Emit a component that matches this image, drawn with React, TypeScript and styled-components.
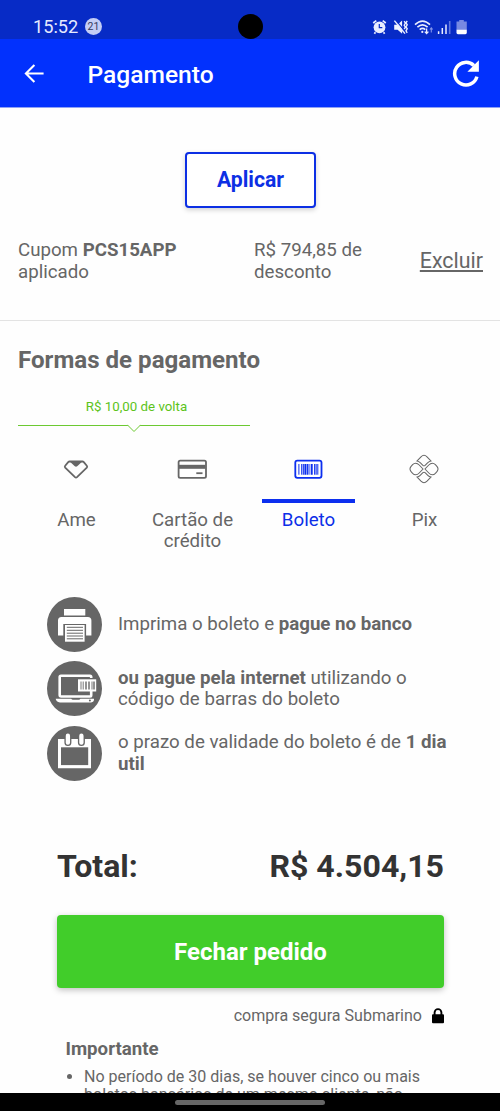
import React from "react";
import styled, { createGlobalStyle } from "styled-components";

const GlobalStyle = createGlobalStyle`
  * { box-sizing: border-box; }
  body { margin: 0; background: #fff; font-family: Roboto, sans-serif; color: #666; }
`;

const Screen = styled.div`
  width: 500px;
  height: 1111px;
  display: flex;
  flex-direction: column;
  overflow: hidden;
  background: #fefefe;
  font-size: 18.7px;
  line-height: 21.7px;
`;

const StatusBar = styled.div`
  height: 39px;
  flex: none;
  display: flex;
  align-items: center;
  padding: 14px 32px 0 33px;
  background: #072bc6;
  color: #e6eaff;
  position: relative;
`;

const Clock = styled.span`
  font-size: 18.2px;
  width: 52px;
  padding-top: 1px;
`;

const Count = styled.span`
  width: 17px;
  height: 17px;
  border-radius: 50%;
  background: #c3cdf5;
  color: #35395c;
  font-size: 10.5px;
  line-height: 17px;
  text-align: center;
`;

const Camera = styled.div`
  position: absolute;
  left: 238px;
  top: 14px;
  width: 25px;
  height: 25px;
  border-radius: 50%;
  background: #000;
`;

const StatusIcons = styled.svg`
  margin-left: auto;
  display: block;
`;

const AppBar = styled.header`
  height: 69px;
  flex: none;
  display: flex;
  align-items: center;
  padding: 1px 20px 0 24px;
  background: #0231fd;
  color: #fff;
  border-bottom: 1px solid #8ea2f5;
`;

const BarTitle = styled.h1`
  margin: 2px 0 0 43.5px;
  flex: 1;
  font-size: 24.6px;
  font-weight: 500;
  line-height: 28px;
`;

const Content = styled.main`
  flex: 1;
  min-height: 0;
  overflow: hidden;
`;

const Coupon = styled.section`
  height: 213px;
  padding: 44px 17px 0 18px;
  display: flex;
  flex-direction: column;
  align-items: center;
  border-bottom: 1px solid #e3e3e3;
`;

const ApplyButton = styled.button`
  width: 131px;
  height: 56px;
  padding: 0 0 1px;
  border: 2px solid #0c2fe4;
  border-radius: 4px;
  background: #fff;
  color: #0c2fe4;
  font: 700 21.2px Roboto, sans-serif;
  box-shadow: 0 2px 5px rgba(0, 0, 0, 0.18);
`;

const CouponRow = styled.div`
  align-self: stretch;
  margin-top: 31px;
  display: grid;
  grid-template-columns: 236px 1fr auto;
  align-items: center;
`;

const CouponText = styled.p<{ $max: number }>`
  margin: 0;
  padding-top: 1px;
  max-width: ${(p) => p.$max}px;
`;

const RemoveLink = styled.a`
  font-size: 21.4px;
  text-decoration: underline;
`;

const Payment = styled.section`
  padding: 25px 18px 0;
`;

const SectionTitle = styled.h2`
  margin: 0;
  font-size: 24.1px;
  line-height: 28px;
`;

const Cashback = styled.div`
  position: relative;
  width: 232px;
  height: 27px;
  margin-top: 25px;
  padding-left: 5px;
  border-bottom: 1px solid #6cc932;
  color: #5cc31a;
  font-size: 13.3px;
  line-height: 16px;
  text-align: center;
`;

const Notch = styled.svg`
  position: absolute;
  left: 109px;
  bottom: -8px;
`;

const Tabs = styled.div`
  display: grid;
  grid-template-columns: repeat(4, 116px);
  margin-top: 15px;
`;

const Tab = styled.div<{ $active?: boolean }>`
  display: flex;
  flex-direction: column;
  align-items: center;
  text-align: center;
  color: ${(p) => (p.$active ? "#0c2fe8" : "#666")};
`;

const TabIcon = styled.div<{ $active?: boolean }>`
  width: 93px;
  height: 62px;
  display: flex;
  justify-content: center;
  padding-top: 13px;
  border-bottom: 4px solid ${(p) => (p.$active ? "#0c2fef" : "transparent")};
`;

const TabLabel = styled.span`
  margin-top: 6.5px;
  padding-left: 1px;
  max-width: 90px;
  min-height: 43.4px;
`;

const Steps = styled.ul`
  list-style: none;
  margin: 44px 0 0;
  padding: 0 23px 0 29px;
  display: flex;
  flex-direction: column;
  gap: 9.5px;
`;

const Step = styled.li`
  display: flex;
  align-items: center;
  gap: 16px;
  height: 55px;
`;

const StepIcon = styled.svg`
  flex: none;
  display: block;
`;

const StepText = styled.p`
  margin: 0;
  padding-top: 1px;
`;

const Checkout = styled.section`
  margin-top: 67.5px;
  padding: 0 56px 0 57px;
`;

const TotalRow = styled.div`
  display: flex;
  justify-content: space-between;
  color: #333;
  font-size: 32.1px;
  font-weight: 700;
  line-height: 37px;
`;

const OrderButton = styled.button`
  display: block;
  width: 100%;
  height: 73px;
  margin-top: 30px;
  padding: 0;
  border: 0;
  border-radius: 4px;
  background: #41cd2a;
  color: #fff;
  font: 700 24px Roboto, sans-serif;
  box-shadow: 0 2px 6px rgba(0, 0, 0, 0.25);
`;

const Secure = styled.div`
  display: flex;
  justify-content: flex-end;
  align-items: center;
  gap: 10px;
  margin-top: 18px;
  font-size: 16.05px;
  line-height: 20px;
`;

const Notice = styled.div`
  padding: 11.5px 0 0 8.5px;
`;

const NoticeTitle = styled.h3`
  margin: 0;
  font-size: 18.67px;
  line-height: 22px;
`;

const NoticeList = styled.ul`
  margin: 8px 0 0;
  padding-left: 18.5px;
  font-size: 16.05px;
  line-height: 18.5px;
`;

const NavBar = styled.div`
  height: 18px;
  flex: none;
  display: flex;
  justify-content: center;
  align-items: center;
  background: #000;
`;

const Handle = styled.div`
  width: 150px;
  height: 5px;
  border-radius: 3px;
  background: #666;
`;

const SystemIcons = () => (
  <StatusIcons width="96" height="18" viewBox="0 0 96 18" fill="none" stroke="#e9edff">
    <circle cx="7.5" cy="9.3" r="5.9" fill="#e9edff" stroke="none" />
    <path d="M1.2 5 4.3 2.6M10.7 2.6 13.8 5M3.4 14.2l-1 1.6M11.6 14.2l1 1.6" strokeWidth="1.7" />
    <path d="M7.3 6v3.6h3" stroke="#072bc6" strokeWidth="1.2" />
    <path d="M22.2 6.8h3.4l4.5-4.4v13.4l-4.5-4h-3.4z" fill="#f1f4ff" stroke="none" />
    <path d="m24 2.4 9.6 12" stroke="#072bc6" strokeWidth="1.3" />
    <path d="m22.4 2.6 10.6 13" strokeWidth="1.5" />
    <path d="M32.2 3.2l1.2 2-1.2 2 1.2 2-1.2 2M35.2 2.8l-1.2 2 1.2 2-1.2 2 1.2 2-1.2 2 1.2 2" strokeWidth="1.4" />
    <path d="M43 6.7q7.5-7.2 15 0M45.4 9.2q5.1-4.8 10.2 0M47.7 11.6q2.8-2.5 5.6 0" strokeWidth="1.6" />
    <circle cx="50.3" cy="13.9" r="1.1" fill="#e9edff" stroke="none" />
    <path d="M54.6 10.5v5M52.8 13.6l1.8 2 1.8-2" strokeWidth="1.3" />
    <path d="M59.3 14.5v-4M57.9 11.5l1.4-1.6 1.4 1.6" stroke="#8295ea" strokeWidth="1.1" />
    <path d="M66.6 13.2v2.8M70.3 10v6M74 6.4V16" strokeWidth="1.5" />
    <path d="M77.7 3v13" stroke="#6178df" strokeWidth="1.6" />
    <path d="M87.2 2h4.6v1.6h3V12H84.5V3.6h2.7z" fill="#7789e2" stroke="none" />
    <path d="M84.5 11.8h10.3v3q0 1.4-1.4 1.4h-7.5q-1.4 0-1.4-1.4z" fill="#fff" stroke="none" />
  </StatusIcons>
);

const BackIcon = () => (
  <svg width="20" height="20" viewBox="0 0 20 20" fill="none" stroke="#fff" strokeWidth="2.1">
    <path d="M19.6 9.5H2.2M10.4 1 1.9 9.5l8.5 8.5" />
  </svg>
);

const ReloadIcon = () => (
  <svg width="28" height="28" viewBox="0 0 28 28">
    <path d="M24.9 16.6A11.3 11.3 0 1 1 21.9 5.6" fill="none" stroke="#fff" strokeWidth="3.5" />
    <path d="M26.9.2V11.8H15.4z" fill="#fff" />
  </svg>
);

const AmeIcon = () => (
  <svg width="26" height="30" viewBox="-13 -15 26 30" fill="none" stroke="#666" strokeWidth="1.8" strokeLinejoin="round">
    <path d="M-6.4-7.5H6.4Q7.2-7.5 7.8-6.9L10.8-3.2Q11.6-2.2 10.8-1.3L1 8.2Q0 9.1-1 8.2L-10.8-1.3Q-11.6-2.2-10.8-3.2L-7.8-6.9Q-7.2-7.5-6.4-7.5z" />
    <path d="M-6.3-7.5H6.3L1.2-2.8Q0-1.9-1.2-2.8z" fill="#666" stroke="none" />
  </svg>
);

const CardIcon = () => (
  <svg width="30" height="30" viewBox="-15 -15 30 30" fill="none" stroke="#666" strokeWidth="1.8">
    <rect x="-13.4" y="-8.4" width="27.4" height="17.2" rx="1.6" />
    <path d="M-13-2.2h26.5" strokeWidth="4" />
    <path d="M4.3 4.2h6.2" strokeWidth="1.8" />
  </svg>
);

const BarcodeIcon = () => (
  <svg width="30" height="30" viewBox="-15 -15 30 30" fill="none" stroke="#0c2fef" strokeWidth="1.8">
    <rect x="-12.7" y="-8.4" width="26.2" height="17.2" rx="2" />
    <path d="M-9.1-5V5.7M-6.3-5V5.7M1-5V5.7M6.6-5V5.7M9.8-5V5.7" strokeWidth="1" />
    <path d="M-2.6-5V5.7M3.7-5V5.7" strokeWidth="2" />
    <path d="M-4.7-5V5.7M-.6-5V5.7M8.1-5V5.7" strokeWidth="1.1" />
  </svg>
);

const PixIcon = () => {
  const vertical =
    "M-6.9-8.1L-3-12.2Q0-15.2 3-12.2L6.9-8.1Q5.2-7.8 3.8-6.3L1.1-3.7Q0-2.7-1.1-3.7L-3.8-6.3Q-5.2-7.8-6.9-8.1z";
  const side =
    "M-1 0-4.8-4Q-6.4-5.7-8.4-5.7-10-5.7-11.4-4.3L-13.1-2.4Q-14.9 0-13.1 2.4L-11.4 4.3Q-10 5.7-8.4 5.7-6.4 5.7-4.8 4z";
  return (
    <svg width="30" height="30" viewBox="-15 -15 30 30" fill="none" stroke="#666" strokeWidth="1.05">
      <path d={vertical} />
      <path d={vertical} transform="rotate(180)" />
      <path d={side} />
      <path d={side} transform="rotate(180)" />
    </svg>
  );
};

const PrinterStep = () => (
  <StepIcon width="55" height="55" viewBox="0 0 55 55">
    <circle cx="27.5" cy="27.5" r="27.5" fill="#666" />
    <path d="M17 12h21.3v6.4H17zM14.5 20h26.3q3.6 0 3.6 3.6v14.8h-5.3V27H16.3v11.4H11V23.6Q11 20 14.5 20z" fill="#fff" />
    <path d="M18 28h19.6v16.7H18z" fill="#fff" />
    <path d="M19.8 30.3H36M19.8 33.3H36M19.8 36.2H36M19.8 39H36M19.8 41.8H36" stroke="#666" />
  </StepIcon>
);

const LaptopStep = () => (
  <StepIcon width="55" height="55" viewBox="0 0 55 55">
    <circle cx="27.5" cy="27.5" r="27.5" fill="#666" />
    <path d="M44.2 17V16q0-1.2-1.2-1.2H14Q12.7 14.8 12.7 16V34q0 1.5 1.5 1.5H43q1.2 0 1.2-1.2V30" fill="none" stroke="#fff" strokeWidth="2.6" />
    <path d="M8.7 37.7h15.5q.7 1 1.7 1h6q1 0 1.5-1H47q.5 3-3 3.8H13q-4-.8-4.3-3.8z" fill="#fff" />
    <circle cx="42.9" cy="39.4" r="1" fill="#666" />
    <path d="M31 18.3h18.2v12.2H31z" fill="#fff" />
    <path d="M34 20.5v8M36.2 20.5v8M45 20.5v8" stroke="#666" strokeWidth=".9" />
    <path d="M39 20.5v8M42 20.5v8M47 20.5v8" stroke="#666" strokeWidth="1.4" />
  </StepIcon>
);

const CalendarStep = () => (
  <StepIcon width="55" height="55" viewBox="0 0 55 55">
    <circle cx="27.5" cy="27.5" r="27.5" fill="#666" />
    <path d="M11 13h33v29.3H11z" fill="#fff" />
    <path d="M14 21.3h27.2v17.8H14z" fill="#666" />
    <path d="M20.9 10v6.5M34.4 10v6.5" stroke="#666" strokeWidth="7" strokeLinecap="round" />
    <path d="M20.9 9.7v7M34.4 9.7v7" stroke="#fff" strokeWidth="4.3" strokeLinecap="round" />
  </StepIcon>
);

const LockIcon = () => (
  <svg width="12" height="16" viewBox="0 0 12 16">
    <rect y="6.2" width="12" height="9" rx="1" fill="#000" />
    <path d="M2.6 7V4.5a3.4 3.4 0 0 1 6.8 0V7" fill="none" stroke="#000" strokeWidth="1.9" />
  </svg>
);

const tabs = [
  { label: "Ame", Icon: AmeIcon },
  { label: "Cartão de crédito", Icon: CardIcon },
  { label: "Boleto", Icon: BarcodeIcon, active: true },
  { label: "Pix", Icon: PixIcon },
];

export default function App() {
  return (
    <Screen>
      <GlobalStyle />
      <StatusBar>
        <Clock>15:52</Clock>
        <Count>21</Count>
        <Camera />
        <SystemIcons />
      </StatusBar>
      <AppBar>
        <BackIcon />
        <BarTitle>Pagamento</BarTitle>
        <ReloadIcon />
      </AppBar>
      <Content>
        <Coupon>
          <ApplyButton>Aplicar</ApplyButton>
          <CouponRow>
            <CouponText $max={190}>
              Cupom <b>PCS15APP</b> aplicado
            </CouponText>
            <CouponText $max={125}>R$ 794,85 de desconto</CouponText>
            <RemoveLink>Excluir</RemoveLink>
          </CouponRow>
        </Coupon>
        <Payment>
          <SectionTitle>Formas de pagamento</SectionTitle>
          <Cashback>
            R$ 10,00 de volta
            <Notch width="14" height="9" viewBox="0 0 14 9">
              <path d="M.5 0h13v1L7 7.5.5 1z" fill="#fefefe" />
              <path d="M.3.8 7 7.5 13.7.8" fill="none" stroke="#6cc932" />
            </Notch>
          </Cashback>
          <Tabs>
            {tabs.map(({ label, Icon, active }) => (
              <Tab key={label} $active={active}>
                <TabIcon $active={active}>
                  <Icon />
                </TabIcon>
                <TabLabel>{label}</TabLabel>
              </Tab>
            ))}
          </Tabs>
          <Steps>
            <Step>
              <PrinterStep />
              <StepText>
                Imprima o boleto e <b>pague no banco</b>
              </StepText>
            </Step>
            <Step>
              <LaptopStep />
              <StepText>
                <b>ou pague pela internet</b> utilizando o código de barras do boleto
              </StepText>
            </Step>
            <Step>
              <CalendarStep />
              <StepText>
                o prazo de validade do boleto é de <b>1 dia util</b>
              </StepText>
            </Step>
          </Steps>
        </Payment>
        <Checkout>
          <TotalRow>
            <span>Total:</span>
            <span>R$ 4.504,15</span>
          </TotalRow>
          <OrderButton>Fechar pedido</OrderButton>
          <Secure>
            compra segura Submarino
            <LockIcon />
          </Secure>
          <Notice>
            <NoticeTitle>Importante</NoticeTitle>
            <NoticeList>
              <li>No período de 30 dias, se houver cinco ou mais boletos bancários de um mesmo cliente, não</li>
            </NoticeList>
          </Notice>
        </Checkout>
      </Content>
      <NavBar>
        <Handle />
      </NavBar>
    </Screen>
  );
}
